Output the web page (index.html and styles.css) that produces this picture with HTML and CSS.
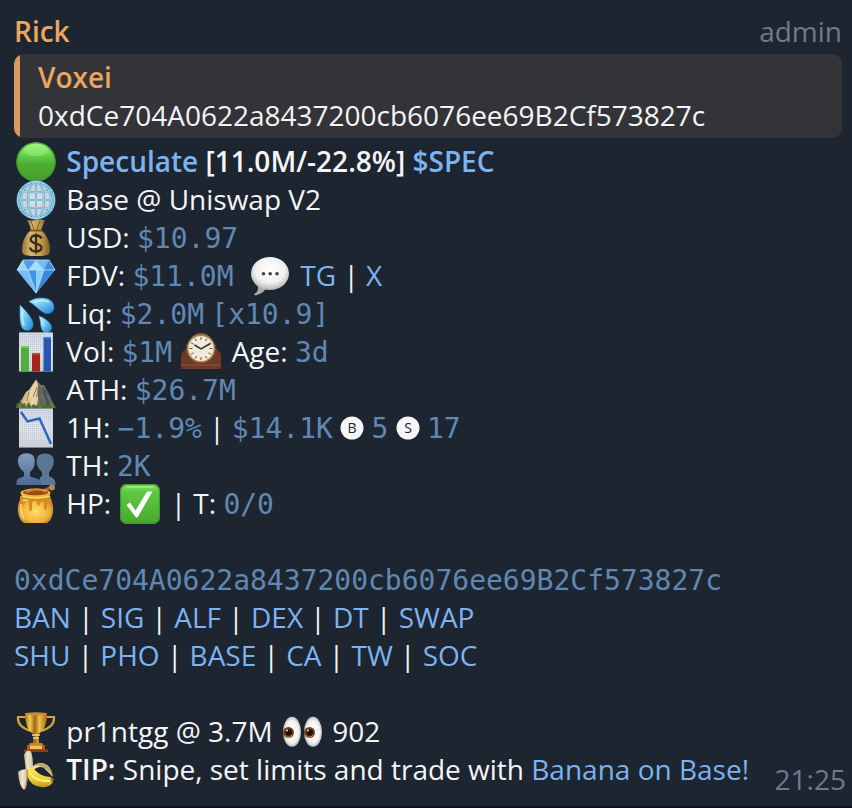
FILE: index.html
```html
<!DOCTYPE html>
<html lang="en">
<head>
<meta charset="utf-8">
<meta name="viewport" content="width=device-width, initial-scale=1">
<title>Rick</title>
<link rel="stylesheet" href="styles.css">
</head>
<body>
<svg class="defs" aria-hidden="true">
  <defs>
    <linearGradient id="green" x1="0" y1="0" x2="0" y2="1"><stop offset="0" stop-color="#94fa76"/><stop offset=".3" stop-color="#6bd44e"/><stop offset=".55" stop-color="#4cae33"/><stop offset="1" stop-color="#459c2c"/></linearGradient>
    <radialGradient id="globe"><stop offset="0" stop-color="#e0dedf"/><stop offset=".75" stop-color="#cbd5dc"/><stop offset="1" stop-color="#8fc3dd"/></radialGradient>
    <linearGradient id="bag"><stop offset="0" stop-color="#94733a"/><stop offset=".3" stop-color="#d9b56a"/><stop offset=".7" stop-color="#c39a4b"/><stop offset="1" stop-color="#7d5c27"/></linearGradient>
    <linearGradient id="drop" x1="0" y1="0" x2="1" y2="1"><stop offset="0" stop-color="#c5f2fd"/><stop offset=".4" stop-color="#7ed0f5"/><stop offset="1" stop-color="#1882d6"/></linearGradient>
    <linearGradient id="paper" x1="0" y1="0" x2="0" y2="1"><stop offset="0" stop-color="#d5dde6"/><stop offset=".5" stop-color="#e9ecf1"/><stop offset="1" stop-color="#d2d6dd"/></linearGradient>
    <pattern id="grid" width="2" height="2" patternUnits="userSpaceOnUse"><path d="M0 .5H2M.5 0V2" stroke="#b3bdca" stroke-width=".35"/></pattern>
    <linearGradient id="rock"><stop offset="0" stop-color="#c8aa75"/><stop offset=".45" stop-color="#e5cf9d"/><stop offset=".55" stop-color="#887860"/><stop offset="1" stop-color="#4c5560"/></linearGradient>
    <linearGradient id="people" x1="0" y1="0" x2="0" y2="1"><stop offset="0" stop-color="#819bbb"/><stop offset="1" stop-color="#4c6b91"/></linearGradient>
    <radialGradient id="honey" cx=".5" cy=".6" r=".6"><stop offset="0" stop-color="#ffdc68"/><stop offset=".6" stop-color="#f2b63c"/><stop offset="1" stop-color="#bc741a"/></radialGradient>
    <linearGradient id="check" x1="0" y1="0" x2="0" y2="1"><stop offset="0" stop-color="#86df68"/><stop offset=".2" stop-color="#5dc943"/><stop offset="1" stop-color="#46a92d"/></linearGradient>
    <radialGradient id="bubble" cx=".5" cy=".4" r=".6"><stop offset="0" stop-color="#fff"/><stop offset=".65" stop-color="#f0f0f0"/><stop offset="1" stop-color="#b4b4b4"/></radialGradient>
    <linearGradient id="wood" x1="0" y1="0" x2="0" y2="1"><stop offset="0" stop-color="#8a513a"/><stop offset="1" stop-color="#5b2f20"/></linearGradient>
    <linearGradient id="gold"><stop offset="0" stop-color="#a56b16"/><stop offset=".22" stop-color="#f4cc57"/><stop offset=".45" stop-color="#9d6412"/><stop offset=".65" stop-color="#efbf48"/><stop offset="1" stop-color="#a86914"/></linearGradient>
    <radialGradient id="eye"><stop offset="0" stop-color="#fff"/><stop offset=".75" stop-color="#f1f1f1"/><stop offset="1" stop-color="#bdbdbd"/></radialGradient>
    <linearGradient id="banana" x1="0" y1="0" x2="0" y2="1"><stop offset="0" stop-color="#fbe65b"/><stop offset=".6" stop-color="#f0cd35"/><stop offset="1" stop-color="#bf981a"/></linearGradient>
    <linearGradient id="flesh"><stop offset="0" stop-color="#c5b28f"/><stop offset=".45" stop-color="#f0e6cf"/><stop offset="1" stop-color="#cdbb95"/></linearGradient>
  </defs>
</svg>

<main class="message">
  <header class="head">
    <strong class="name">Rick</strong>
    <span class="muted">admin</span>
  </header>

  <blockquote class="quote">
    <strong class="name">Voxei</strong>
    <p>0xdCe704A0622a8437200cb6076ee69B2Cf573827c</p>
  </blockquote>

  <section class="block">
    <p><svg class="emoji" viewBox="0 0 40 40"><circle cx="20" cy="20" r="19.7" fill="url(#green)"/><circle cx="20" cy="20" r="19" fill="none" stroke="#3c9127" stroke-width="1.2" opacity=".75"/><ellipse cx="20" cy="8" rx="12" ry="6" fill="#b2ff98" opacity=".35"/></svg> <strong><a href="#speculate">Speculate</a> [11.0M/-22.8%] <a href="#spec">$SPEC</a></strong></p>

    <p><svg class="emoji" viewBox="0 0 40 40"><circle cx="20" cy="20" r="18.7" fill="url(#globe)"/><g fill="none" stroke="#559cc0" stroke-width="2"><circle cx="20" cy="20" r="18.5"/><ellipse cx="20" cy="20" rx="8" ry="18.5"/><ellipse cx="20" cy="20" rx="15" ry="18.5"/><path d="M20 1.500V38.500M1.500 20H38.500M4.500 10.500Q20 14 35.500 10.500M4.500 29.500Q20 26 35.500 29.500"/></g><g fill="none" stroke="#a8dcf0" stroke-width="1"><circle cx="20" cy="20" r="18.5"/><ellipse cx="20" cy="20" rx="8" ry="18.5"/><ellipse cx="20" cy="20" rx="15" ry="18.5"/><path d="M20 1.500V38.500M1.500 20H38.500M4.500 10.500Q20 14 35.500 10.500M4.500 29.500Q20 26 35.500 29.500"/></g></svg> Base @ Uniswap V2</p>

    <p><svg class="emoji" viewBox="0 0 40 40"><path d="M11 2Q15 3 20 2T29 2Q27 8 25 12H15Q14 7 11 2Z" fill="url(#bag)"/><path d="M15 3L18 11M24 3L21 11" stroke="#7b592a"/><path d="M15 12H25C30 16 34 23 34 32C34 37 32 38 20 38S6 37 6 32C6 23 10 16 15 12Z" fill="url(#bag)"/><path d="M14 12.500H26" stroke="#80551d" stroke-width="2"/><path d="M25.500 20.500C24.500 18 22.500 17.500 20 17.500C16.500 17.500 14.700 19.300 14.700 21.600C14.700 27 25.500 24 25.500 29.600C25.500 32 23.500 33.500 20 33.500C16.500 33.500 14.600 31.800 14 29.500M20 15.500V35.500" fill="none" stroke="#372c20" stroke-width="2.300"/></svg> USD: <code>$10.97</code></p>

    <p><svg class="emoji" viewBox="0 0 40 40"><path d="M7 4H33L39 14L20 37.500L1 14Z" fill="#5aa9ed"/><path d="M7 4L1 14H12Z" fill="#9dd4fa"/><path d="M7 4H20L12 14Z" fill="#4d9eea"/><path d="M20 4L12 14H28Z" fill="#a8defd"/><path d="M20 4H33L28 14Z" fill="#72bbf5"/><path d="M33 4L39 14H28Z" fill="#3e8ddd"/><path d="M1 14H12L20 37.500Z" fill="#75bdf5"/><path d="M12 14H20V37.500Z" fill="#3f94e3"/><path d="M20 14H28L20 37.500Z" fill="#8ccdfa"/><path d="M28 14H39L20 37.500Z" fill="#3c87d4"/><path d="M7 4H33L39 14H1ZM12 14L20 37M28 14L20 37" fill="none" stroke="#b9e7ff" stroke-width=".8"/></svg> FDV: <code>$11.0M</code>&nbsp; <svg class="emoji" viewBox="0 0 40 40"><path d="M7 27C9 33 8 36 4 38Q4 40 7 39Q15 36 17 31Z" fill="#aaa"/><ellipse cx="20" cy="17.500" rx="19" ry="16.500" fill="url(#bubble)"/><g fill="#444"><circle cx="13.500" cy="17.700" r="1.800"/><circle cx="20.200" cy="17.700" r="1.800"/><circle cx="27" cy="17.700" r="1.800"/></g></svg> <a href="#tg">TG</a> | <a href="#x">X</a></p>

    <p><svg class="emoji" viewBox="0 0 40 40"><g fill="url(#drop)" stroke="#3497df" stroke-width=".6"><path d="M13 7.500C20 3 29 3 34 6C40 10 39 19 32 19.500C26 20 21 12 13 7.500Z"/><path d="M4 11C10 17 17 25 17 30C17 36 12 37 9 36C3 34 4 22 4 11Z"/><path d="M23 22C29 24 35 29 35.500 33C36 38 30 40 27 37C24 34 25 28 23 22Z"/></g><g fill="none" stroke="#dcf9ff" stroke-linecap="round" opacity=".6"><path d="M19 8Q27 5 32 8" stroke-width="2"/><path d="M6.500 18Q5.500 26 8 31" stroke-width="2"/><path d="M26 26Q27 30 28 32" stroke-width="1.500"/></g></svg> Liq: <code>$2.0M</code> <code>[x10.9]</code></p>

    <p><svg class="emoji" viewBox="0 0 40 40"><path d="M3 .500H37V39.500H3Z" fill="url(#paper)"/><path d="M3 .500H37V39.500H3Z" fill="url(#grid)"/><path d="M5 14H13V39.500H5Z" fill="#4eb03b"/><path d="M16 21H24V39.500H16Z" fill="#a9221c"/><path d="M27.500 5H35V39.500H27.500Z" fill="#2656b3"/><path d="M5 14H13V16H5Z" fill="#73cb5d"/><path d="M16 21H24V22.500H16Z" fill="#c94e42"/><path d="M27.500 5H35V6.500H27.500Z" fill="#4d7bd0"/></svg> Vol: <code>$1M</code> <svg class="emoji" viewBox="0 0 40 40"><path d="M3 32V22C3 18 5 16 7 15L4 13L8 12C9 5 14 1 20 1S31 5 32 12L36 13L33 15C35 16 38 18 38 22V32Z" fill="url(#wood)"/><path d="M0 32V23Q1 18 6 18H34Q39 18 40 23V37H0Z" fill="#6e3927"/><path d="M0 33H40" stroke="#91563c"/><circle cx="20" cy="16.500" r="14.300" fill="#aa8041"/><circle cx="20" cy="16.500" r="12.600" fill="#f1eadb"/><g stroke="#595047" stroke-width="1"><path d="M20 5V8M20 25V28M8.500 16.500H11.500M28.500 16.500H31.500M14.200 6.500L15.500 9M25.800 6.500L24.500 9M10 10.700L12.500 12.200M30 10.700L27.500 12.200M10 22.300L12.500 20.800M30 22.300L27.500 20.800M14.200 26.500L15.500 24M25.800 26.500L24.500 24"/></g><path d="M13.500 13L20 17L29.500 11.500" fill="none" stroke="#332f2b" stroke-width="1.500"/></svg> Age: <code>3d</code></p>

    <p><svg class="emoji" viewBox="0 0 40 40"><path d="M2 36L10 22L13 20L20 9.500L22 12L25 15L28 15L33 24L39 37H2Z" fill="url(#rock)"/><path d="M20 10L14 22L8 33L16 27L13 36H20L23 25L19 29L22 16Z" fill="#e8d3a2"/><path d="M22 14L27 22L25 25L31 33L25 37L22 28Z" fill="#65645c"/><path d="M26 16L32 24L34 32L39 37H30L27 24Z" fill="#475361"/><path d="M21 17L17 27M13 22L11 31M27 26L30 35M31 24L35 34" stroke="#8b7757" fill="none"/><path d="M0 38L1 33L3 34L4 29L6 34L9 33L10 36L13 32L15 36L18 34L20 36L24 33L26 36L30 34L33 36L36 31L38 34L40 38Z" fill="#506c2c"/><path d="M4 34V38M9 34L11 38M14 34L16 38M24 35V38M35 33L37 38" stroke="#91ab53" stroke-width=".8"/></svg> ATH: <code>$26.7M</code></p>

    <p><svg class="emoji" viewBox="0 0 40 40"><path d="M3 .500H37V39.500H3Z" fill="url(#paper)"/><path d="M3 .500H37V39.500H3Z" fill="url(#grid)"/><path d="M5 4L11.500 13.500L23.500 10.500L35 36" fill="none" stroke="#2864c3" stroke-width="2.400"/></svg> 1H: <code>−1.9%</code> | <code>$14.1K</code> <svg class="badge" viewBox="0 0 24 24"><circle cx="12" cy="12" r="11.500"/><text x="12" y="17">B</text></svg> <code>5</code> <svg class="badge" viewBox="0 0 24 24"><circle cx="12" cy="12" r="11.500"/><text x="12" y="17">S</text></svg> <code>17</code></p>

    <p><svg class="emoji" viewBox="0 0 40 40"><path d="M22 39C25 31 22 33 26 30V26C21 22 19 15 22 10C25 6.500 34 6.500 37 11C39 17 37 22 33 26V30C35 32 39 31 39.500 38V39Z" fill="#5b7796"/><path d="M.500 39V36C1 31 6 32 8 30V26C2 22 0 13 4 9.500C8 6 16 7 18 11C20 17 18 23 14 26V30C17 33 25 31 26 39Z" fill="url(#people)"/></svg> TH: <code>2K</code></p>

    <p><svg class="emoji" viewBox="0 0 40 40"><path d="M25 8L35 3" stroke="#a26635" stroke-width="3"/><circle cx="36" cy="3.500" r="3" fill="#bd8358"/><path d="M5 10H34C33 14 36 15 37 22C38 30 35 37 31 39H8C4 37 1 30 2 22C3 15 6 14 5 10Z" fill="url(#honey)"/><ellipse cx="19.500" cy="9" rx="15" ry="4.500" fill="#efb43d"/><ellipse cx="19.500" cy="8.500" rx="12.500" ry="2.700" fill="#935010"/><path d="M10 8Q22 3 30 8" fill="none" stroke="#d9882c" stroke-width="2"/><path d="M4 12Q18 16 34 12L36 19Q34 23 33 16Q31 18 31 24Q30 28 28 25V18Q25 16 24 20Q23 23 21 20V18Q17 15 16 19V26Q14 29 13 25V18Q9 16 8 19Q6 24 4 19Z" fill="#d98b20"/><path d="M6 12Q20 16 34 12M7 17Q8 15 12 17" fill="none" stroke="#ffdc73" stroke-width="1.500"/><path d="M5 20Q4 29 8 35" fill="none" stroke="#fff0a5" stroke-width="2" opacity=".6"/></svg> HP: <svg class="emoji" viewBox="0 0 40 40"><rect width="40" height="40" rx="7" fill="url(#check)"/><rect x=".700" y=".700" width="38.600" height="38.600" rx="6.500" fill="none" stroke="#389423" stroke-width="1"/><path d="M7 3H33" stroke="#abef94" stroke-width="2" stroke-linecap="round" opacity=".6"/><path d="M6.500 21L10 18.500L15.500 26.500L27 7.500H32.500L17.500 33.500H16Z" fill="#fff"/></svg> | T: <code>0/0</code></p>
  </section>

  <section class="block">
    <p><code>0xdCe704A0622a8437200cb6076ee69B2Cf573827c</code></p>
    <p><a href="#ban">BAN</a> | <a href="#sig">SIG</a> | <a href="#alf">ALF</a> | <a href="#dex">DEX</a> | <a href="#dt">DT</a> | <a href="#swap">SWAP</a></p>
    <p><a href="#shu">SHU</a> | <a href="#pho">PHO</a> | <a href="#base">BASE</a> | <a href="#ca">CA</a> | <a href="#tw">TW</a> | <a href="#soc">SOC</a></p>
  </section>

  <p><svg class="emoji" viewBox="0 0 40 40"><path d="M10 5H2Q1 15 15 19M30 5H38Q39 15 25 19" fill="none" stroke="#d5a33a" stroke-width="2.200"/><path d="M9 1H31C31 14 27 20 22 22L23 32H17L18 22C13 20 9 14 9 1Z" fill="url(#gold)"/><ellipse cx="20" cy="1.800" rx="11" ry="1.600" fill="#c59132"/><path d="M16 23H24M17 26H23" stroke="#ffdf79" stroke-width="1.300"/><path d="M14 31H26L29 36H11Z" fill="#c8862b"/><path d="M11 33H29V38H11Z" fill="#b25b23"/><path d="M14 33.500H26V37H14Z" fill="#f0c653"/><path d="M8 37.500H32V40H8Z" fill="#8d3d18"/></svg> pr1ntgg @ 3.7M <svg class="emoji" viewBox="0 0 40 40"><ellipse cx="10" cy="19.800" rx="9" ry="15" fill="url(#eye)"/><ellipse cx="31" cy="19.800" rx="9" ry="15" fill="url(#eye)"/><g fill="#70431a"><circle cx="6.500" cy="20.500" r="5.500"/><circle cx="27.500" cy="20.500" r="5.500"/></g><g fill="#1d100a"><circle cx="6.800" cy="20.500" r="3.300"/><circle cx="27.800" cy="20.500" r="3.300"/></g><g fill="none" stroke="#c79245" stroke-width="1"><path d="M2.500 23Q6 28 10 23M23.500 23Q27 28 31 23"/></g><g fill="#fff"><circle cx="5" cy="18.500" r=".9"/><circle cx="26" cy="18.500" r=".9"/></g></svg> 902</p>

  <footer class="foot">
    <p><svg class="emoji" viewBox="0 0 40 40"><path d="M10 21L8 5Q10 0 14 1Q17 2 17 20Z" fill="url(#flesh)"/><path d="M15 18C20 12 30 10 35 20L37 27Q31 21 28 18Q23 15 16 21Z" fill="#e9d9ac"/><path d="M18 15C27 10 35 17 37 26Q29 15 18 15Z" fill="#c2a15a"/><path d="M12 19Q17 16 19 20Q25 27 35 27L37 32Q34 38 25 37Q14 36 11 25Z" fill="url(#banana)"/><path d="M14 23Q20 32 34 31" fill="none" stroke="#fff184" stroke-width="2"/><path d="M34 27L38 29L36 33Z" fill="#947722"/><path d="M12 19Q5 19 2 22Q3 36 8 40Q12 36 11 26Z" fill="url(#flesh)"/><path d="M11 20Q12 28 9 39" fill="none" stroke="#ac9061" stroke-width="1.200"/></svg> <strong>TIP:</strong> Snipe, set limits and trade with <a href="#banana-bot">Banana on Base!</a></p>
    <time class="muted" datetime="21:25">21:25</time>
  </footer>
</main>
</body>
</html>
```
FILE: styles.css
```css
* {
  box-sizing: border-box;
}

body {
  margin: 0;
  background: #1c2530;
  color: #f5f5f5;
  font-family: "Open Sans", "Noto Sans", sans-serif;
  font-size: 28px;
  line-height: 38px;
}

p,
blockquote {
  margin: 0;
}

strong {
  font-weight: 600;
}

a {
  color: #7db3f0;
  text-decoration: none;
}

code {
  color: #6188b3;
  font-family: "DejaVu Sans Mono", "Liberation Mono", monospace;
  font-size: 28px;
  line-height: 1;
}

.defs {
  position: absolute;
  width: 0;
  height: 0;
}

.message {
  padding: 12px 10px 8px 14px;
  border-bottom: 2px solid #10131f;
}

.head {
  display: flex;
  justify-content: space-between;
}

.name {
  display: block;
  color: #eda560;
}

.muted {
  color: #6f7b8b;
}

.quote {
  margin: 4px 0;
  padding: 4px 24px;
  border-radius: 10px;
  background: linear-gradient(to right, #d9995f 6px, #333437 6px);
}

.block {
  margin-bottom: 38px;
}

.emoji {
  width: 40px;
  height: 40px;
  margin: -4px 3px -4px 2px;
  vertical-align: -6px;
}

.badge {
  width: 24px;
  height: 24px;
  vertical-align: -2px;
  fill: #f5f5f5;
}

.badge text {
  fill: #1c2530;
  font-size: 14px;
  text-anchor: middle;
}

.foot {
  display: flex;
  justify-content: space-between;
  margin-right: -4px;
}

.foot time {
  padding-top: 10px;
}
```
